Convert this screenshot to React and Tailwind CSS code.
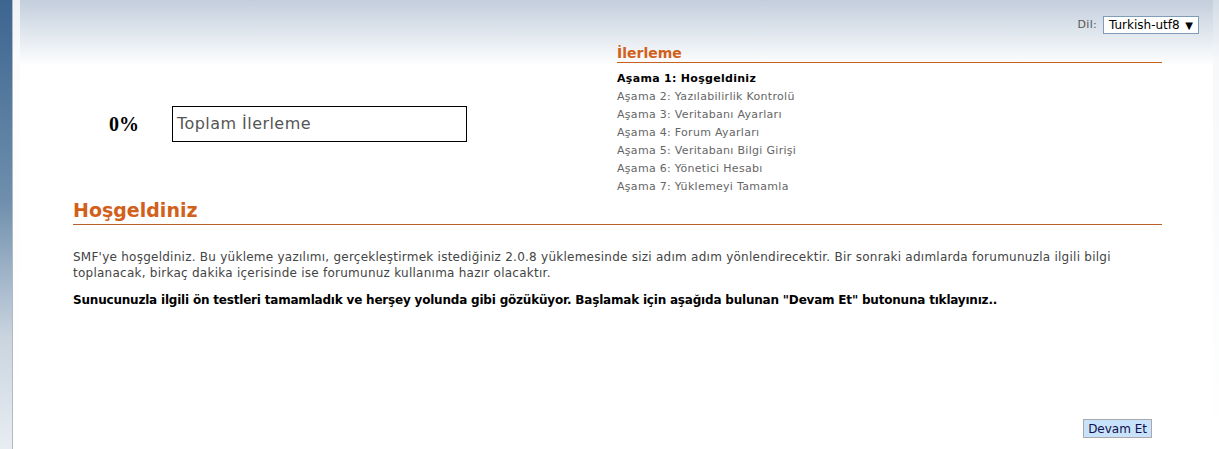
export default function App() {
  const steps = [
    "Aşama 2: Yazılabilirlik Kontrolü",
    "Aşama 3: Veritabanı Ayarları",
    "Aşama 4: Forum Ayarları",
    "Aşama 5: Veritabanı Bilgi Girişi",
    "Aşama 6: Yönetici Hesabı",
    "Aşama 7: Yüklemeyi Tamamla",
  ];

  return (
    <div className="flex min-h-[449px] w-full bg-white font-['DejaVu_Sans',Verdana,sans-serif]">
      {/* sol şerit */}
      <div className="w-[13px] shrink-0 border-r border-[#b4b9bf] bg-[linear-gradient(#3c6590,#6f8fad_45%,#c9d4df_75%,#e8edf2)]" />
      <div className="w-[7px] shrink-0 bg-[linear-gradient(#eef1f6,#fbfcfd_60px,#ffffff)]" />

      <div className="flex flex-1 flex-col bg-[linear-gradient(#c3cedc,#e2e8ef_35px,#ffffff_66px)]">
        <div className="flex flex-col pl-[53px] pr-[51px]">
          {/* dil seçimi */}
          <div className="mt-[16px] mr-[-37px] flex items-center justify-end gap-[6px]">
            <span className="text-[11px] tracking-[0.3px] text-[#555]">Dil:</span>
            <div className="flex h-[18px] w-[96px] items-center justify-between border border-[#7f9db9] bg-white pl-[5px] pr-[5px] text-[12px] text-black">
              <span>Turkish-utf8</span>
              <span className="text-[10px]">▼</span>
            </div>
          </div>

          {/* üst bölüm */}
          <div className="flex">
            <div className="flex w-[544px] items-start">
              <div className="mt-[72px] flex items-center">
                <span className="ml-[36px] w-[63px] font-['Liberation_Serif',serif] text-[20px] font-bold text-black">
                  0%
                </span>
                <div className="flex h-[36px] w-[295px] items-center border border-black pl-[4px] text-[16px] tracking-[0.45px] text-[#555]">
                  Toplam İlerleme
                </div>
              </div>
            </div>
            <div className="flex-1">
              <h2 className="mt-[11px] border-b border-[#c8611f] text-[14px] font-bold leading-[17px] text-[#d2601a]">
                İlerleme
              </h2>
              <ul className="mt-[7px] text-[11px] leading-[18px] tracking-[0.3px] text-[#666]">
                <li className="font-bold text-black">Aşama 1: Hoşgeldiniz</li>
                {steps.map((s) => (
                  <li key={s}>{s}</li>
                ))}
              </ul>
            </div>
          </div>

          {/* hoşgeldiniz */}
          <h1 className="mt-[3px] border-b border-[#b9602a] pb-[2px] text-[19px] font-bold leading-[23px] text-[#d2601a]">
            Hoşgeldiniz
          </h1>
          <p className="mt-[24px] text-[12px] leading-[16px] tracking-[0.25px] text-[#444]">
            SMF'ye hoşgeldiniz. Bu yükleme yazılımı, gerçekleştirmek istediğiniz 2.0.8 yüklemesinde sizi adım adım yönlendirecektir. Bir sonraki adımlarda forumunuzla ilgili bilgi toplanacak, birkaç dakika içerisinde ise forumunuz kullanıma hazır olacaktır.
          </p>
          <p className="mt-[11px] text-[12px] font-bold leading-[16px] tracking-[-0.2px] text-black">
            Sunucunuzla ilgili ön testleri tamamladık ve herşey yolunda gibi gözüküyor. Başlamak için aşağıda bulunan "Devam Et" butonuna tıklayınız..
          </p>

          <div className="mt-[111px] flex justify-end pr-[10px]">
            <button className="h-[19px] border border-[#a9a9a9] bg-[#c9e2fb] px-[4px] text-[12px] leading-[16px] text-[#10104a]">
              Devam Et
            </button>
          </div>
        </div>
      </div>
      <div className="w-[6px] shrink-0 bg-[linear-gradient(#d3dbe5,#f6f8fa_60px,#ffffff)]" />
    </div>
  );
}
